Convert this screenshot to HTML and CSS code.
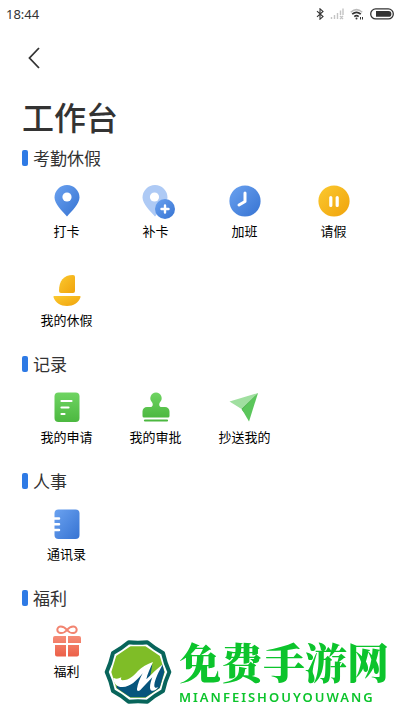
FILE: index.html
```html
<!DOCTYPE html>
<html lang="zh-CN">
<head>
    <meta charset="UTF-8">
    <meta name="viewport" content="width=device-width, initial-scale=1.0">
    <title>工作台</title>
    <link rel="stylesheet" href="styles.css">
</head>
<body>
    <!-- shared gradients -->
    <svg class="defs" width="0" height="0" aria-hidden="true">
        <defs>
            <linearGradient id="blue" x1="0" y1="0" x2="1" y2="1">
                <stop offset="0" stop-color="#6ba2f0"/>
                <stop offset="1" stop-color="#3673d2"/>
            </linearGradient>
            <linearGradient id="yellow" x1="0" y1="0" x2="1" y2="1">
                <stop offset="0" stop-color="#fbc92f"/>
                <stop offset="1" stop-color="#f0a30c"/>
            </linearGradient>
            <linearGradient id="green" x1="0" y1="0" x2="0" y2="1">
                <stop offset="0" stop-color="#6fd462"/>
                <stop offset="1" stop-color="#4cb840"/>
            </linearGradient>
            <linearGradient id="red" x1="0" y1="0" x2="0" y2="1">
                <stop offset="0" stop-color="#f58d78"/>
                <stop offset="1" stop-color="#ec6048"/>
            </linearGradient>
        </defs>
    </svg>

    <div class="status-bar">
        <span>18:44</span>
        <div class="status-icons">
            <svg width="8" height="12" viewBox="0 0 8 12"><path d="M1 3.2 7 8.6 4 11.2V.8l3 2.6L1 8.8" fill="none" stroke="#333" stroke-width="1.1"/></svg>
            <svg width="14" height="12" viewBox="0 0 14 12"><path d="M1.5 9v2M4.5 7v4M7.500 5v6M10.500 2.500V7M13 .5V7M10 8l3 3M13 8l-3 3" fill="none" stroke="#c4c4c4" stroke-width="1.4"/></svg>
            <svg width="14" height="12" viewBox="0 0 14 12"><path d="M.8 4.200Q6.500-1 12.200 4.200" fill="none" stroke="#bbb" stroke-width="1.500"/><path d="M2.200 6.200q4.300-3.700 8.600 0M4.300 8.600q2.200-1.800 4.400 0" fill="none" stroke="#333" stroke-width="1.700"/><circle cx="6.500" cy="10.500" r="1" fill="#333"/><path d="M10.500 9v2.500M12.500 9v2.500" stroke="#333"/></svg>
            <svg width="24" height="12" viewBox="0 0 24 12"><rect x=".7" y=".9" width="22.600" height="10" rx="5" fill="#fff" stroke="#333" stroke-width="1.300"/><path d="M6 3h12.500a2.900 2.900 0 0 1 0 5.800H6z" fill="#333"/></svg>
        </div>
    </div>

    <header class="page-header">
        <button class="back" type="button" aria-label="返回">
            <svg width="14" height="22" viewBox="0 0 14 22"><path d="M12 1 2.500 11 12 21" fill="none" stroke="#333" stroke-width="1.800"/></svg>
        </button>
        <h1>工作台</h1>
    </header>

    <main>
        <section>
            <h2>考勤休假</h2>
            <div class="grid">
                <a class="item" href="#">
                    <svg class="icon" viewBox="0 0 36 36"><path d="M18 33.500C13 28 5.500 20.500 5.500 14.500a12.500 12.500 0 0 1 25 0C30.500 20.500 23 28 18 33.500z" fill="url(#blue)"/><circle cx="18" cy="14" r="4.600" fill="#fff"/></svg>
                    <span>打卡</span>
                </a>
                <a class="item" href="#">
                    <svg class="icon" viewBox="0 0 36 36"><path d="M17 33.500C12 28 4.500 20.500 4.500 14.500a12.500 12.500 0 0 1 25 0C29.500 20.500 22 28 17 33.500z" fill="#aecaf5"/><circle cx="16.500" cy="14" r="4.600" fill="#fff"/><circle cx="27" cy="26" r="10" fill="url(#blue)"/><path d="M27 22.500v7M23.500 26h7" stroke="#fff" stroke-width="2.400" stroke-linecap="round"/></svg>
                    <span>补卡</span>
                </a>
                <a class="item" href="#">
                    <svg class="icon" viewBox="0 0 36 36"><circle cx="18" cy="18" r="15.600" fill="url(#blue)"/><path d="M18 10v8.500l-6 3.500" fill="none" stroke="#fff" stroke-width="3" stroke-linecap="round" stroke-linejoin="round"/></svg>
                    <span>加班</span>
                </a>
                <a class="item" href="#">
                    <svg class="icon" viewBox="0 0 36 36"><circle cx="18" cy="18" r="15.600" fill="url(#yellow)"/><path d="M14.800 14.500v8M21.200 14.500v8" stroke="#fff" stroke-width="3.200" stroke-linecap="round"/></svg>
                    <span>请假</span>
                </a>
                <a class="item" href="#">
                    <svg class="icon" viewBox="0 0 36 36"><path d="M24 3a2 2 0 0 1 2 2v14a2 2 0 0 1-2 2H12a2 2 0 0 1-2-2C10 9 14.500 3 24 3z" fill="url(#yellow)"/><path d="M5.500 24h25a1 1 0 0 1 1 1.300C29.500 31 24.500 34 18 34S6.500 31 4.500 25.300a1 1 0 0 1 1-1.300z" fill="url(#yellow)"/></svg>
                    <span>我的休假</span>
                </a>
            </div>
        </section>

        <section>
            <h2>记录</h2>
            <div class="grid">
                <a class="item" href="#">
                    <svg class="icon" viewBox="0 0 36 36"><rect x="5.500" y="3.500" width="25" height="29.500" rx="4" fill="url(#green)"/><path d="M12.500 12h10M12.500 18.500h7M12.500 25h3" stroke="#fff" stroke-width="2.200" stroke-linecap="round"/></svg>
                    <span>我的申请</span>
                </a>
                <a class="item" href="#">
                    <svg class="icon" viewBox="0 0 36 36"><path d="M18 3.500a5.700 5.700 0 0 1 4 9.700c-1.300 1.600-1 4.800 1.500 4.800H27a4.500 4.500 0 0 1 4.500 4.500V27a1.500 1.500 0 0 1-1.500 1.500H6A1.500 1.500 0 0 1 4.500 27v-4.500A4.500 4.500 0 0 1 9 18h3.500c2.500 0 2.800-3.200 1.500-4.800a5.700 5.700 0 0 1 4-9.700z" fill="url(#green)"/><path d="M7 31.500h22" stroke="#4cb840" stroke-width="2.200" stroke-linecap="round"/></svg>
                    <span>我的审批</span>
                </a>
                <a class="item" href="#">
                    <svg class="icon" viewBox="0 0 36 36"><path d="M31 4 2.500 12.500l12 7.500z" fill="#a0dfa0"/><path d="M31 4 14.500 20l2 3z" fill="#3ca83c"/><path d="M31 4 15 20.500l7 12z" fill="#5bc65b"/></svg>
                    <span>抄送我的</span>
                </a>
            </div>
        </section>

        <section>
            <h2>人事</h2>
            <div class="grid">
                <a class="item" href="#">
                    <svg class="icon" viewBox="0 0 36 36"><rect x="5.500" y="3.500" width="25" height="29.500" rx="4" fill="url(#blue)"/><path d="M4 12.500h6M4 18.300h6M4 24.100h6" stroke="#fff" stroke-width="2.500" stroke-linecap="round"/></svg>
                    <span>通讯录</span>
                </a>
            </div>
        </section>

        <section>
            <h2>福利</h2>
            <div class="grid">
                <a class="item" href="#">
                    <svg class="icon" viewBox="0 0 36 36"><path d="M18 7C16 4.500 14 3.500 11.800 3.500a3.500 3.300 0 0 0 0 6.600C14 10.100 16 9.500 18 7s4-3.500 6.200-3.500a3.500 3.300 0 0 1 0 6.600C22 10.100 20 9.500 18 7z" fill="none" stroke="#f28470" stroke-width="2"/><path d="M6 13h11v7H4v-5a2 2 0 0 1 2-2zM19 13h11a2 2 0 0 1 2 2v5H19zM6 22h11v11.500H8a2 2 0 0 1-2-2zM19 22h11v9.500a2 2 0 0 1-2 2h-9z" fill="url(#red)"/></svg>
                    <span>福利</span>
                </a>
            </div>
        </section>
    </main>

    <div class="watermark">
        <svg width="68" height="66" viewBox="10 8 204 198" aria-hidden="true">
            <!-- rounded decagon frame -->
            <path d="M206 107Q194 81 187 50 161 36 140 18 112 21 84 18 63 36 37 50 30 81 18 107 30 133 37 164 63 178 84 196 112 193 140 196 161 178 187 164 194 133 206 107z" fill="#fff" stroke="#08655b" stroke-width="12" stroke-linejoin="round"/>
            <path d="M189 107 175 61 134 33H90L49 61 35 107l14 46 41 28h44l41-28z" fill="#7fbd27" stroke="#7fbd27" stroke-width="6" stroke-linejoin="round"/>
            <path d="M48 142C90 154 110 120 155 84l-8 44 38-44 6 23-14 48-42 28H89L48 155z" fill="#07557c"/>
            <path d="M38 124c10 5 15 3 24-1-2 5-1 9 3 9 22 0 34-14 46-27 13-14 28-22 46-28-9 20-17 36-20 52 16-16 31-31 51-47-14 22-25 47-27 63-1 10 5 11 12 7-8 13-24 17-25 2 0-11 3-20 7-31l-36 38c-5 4-11 4-10-4 2-14 9-31 17-46-19 23-38 42-62 41-14 0-26-10-26-28z" fill="#fff"/>
        </svg>
        <div class="watermark-text">
            <div class="watermark-name">免费手游网</div>
            <div class="watermark-pinyin">MIANFEISHOUYOUWANG</div>
        </div>
    </div>
</body>
</html>
```
FILE: styles.css
```css
* {
    box-sizing: border-box;
}

body {
    margin: 0;
    background: #fff;
    color: #333;
    font-family: "Noto Sans CJK SC", sans-serif;
}

svg {
    display: block;
}

.defs {
    position: absolute;
}

.status-bar {
    display: flex;
    justify-content: space-between;
    align-items: center;
    height: 28px;
    padding: 0 6px;
    font-family: "Noto Sans", sans-serif;
    font-size: 13px;
}

.status-icons {
    display: flex;
    align-items: center;
    gap: 6px;
}

.page-header {
    padding: 16px 22px 4px;
}

.back {
    display: block;
    padding: 3px 5px;
    border: none;
    background: none;
    cursor: pointer;
}

h1 {
    margin: 20px 0 0;
    font-size: 32px;
    line-height: 48px;
    font-weight: 500;
}

main {
    padding: 0 22px;
}

h2 {
    display: flex;
    align-items: center;
    gap: 5px;
    margin: 0;
    font-size: 17px;
    line-height: 28px;
    font-weight: 400;
}

h2::before {
    content: "";
    width: 6px;
    height: 16px;
    border-radius: 2px;
    background: #2e7ae5;
}

.grid {
    display: grid;
    grid-template-columns: repeat(4, 1fr);
}

.item {
    display: flex;
    flex-direction: column;
    align-items: center;
    gap: 2px;
    padding: 11px 0 20px;
    color: #000;
    font-size: 13px;
    line-height: 20px;
    text-decoration: none;
}

.icon {
    width: 36px;
    height: 36px;
    overflow: visible;
}

/* sits over the bottom of the page */
.watermark {
    position: fixed;
    right: 11px;
    bottom: 6px;
    display: flex;
    align-items: flex-end;
    gap: 7px;
}

.watermark-text {
    color: #0cc42c;
}

.watermark-name {
    font-family: "Noto Serif CJK SC", "Noto Sans CJK SC", serif;
    font-size: 42px;
    line-height: 56px;
    font-weight: 900;
}

.watermark-pinyin {
    font-family: "Noto Sans", sans-serif;
    font-size: 13px;
    line-height: 16px;
    font-weight: 600;
    letter-spacing: 2px;
}
```
